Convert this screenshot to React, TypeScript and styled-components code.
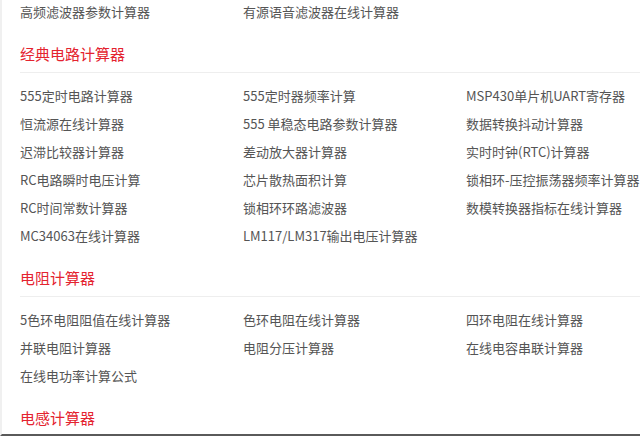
import React from 'react';
import styled, { createGlobalStyle } from 'styled-components';

const GlobalStyle = createGlobalStyle`
  html, body {
    margin: 0;
    padding: 0;
    background: #fff;
    overflow: hidden;
  }
`;

const StyledPage = styled.div`
  height: 434px;
  overflow: hidden;
  border-left: 2px solid #f0f0f0;
  border-bottom: 2px solid #5a5a5a;
  font-family: 'Noto Sans CJK SC', 'Microsoft YaHei', sans-serif;
`;

const StyledInner = styled.div`
  margin-top: -2px;
  padding-left: 18px;
`;

const StyledHeading = styled.h3`
  margin: 0;
  padding: 13px 0 6px;
  line-height: 24px;
  font-size: 15px;
  font-weight: normal;
  color: #e4232f;
  border-bottom: 1px solid #eeeeee;
`;

const StyledList = styled.ul<{ $top: number }>`
  list-style: none;
  margin: 0;
  padding: ${({ $top }) => $top}px 0 3px;
  display: grid;
  grid-template-columns: repeat(3, 223px);
`;

const StyledItem = styled.li`
  height: 28px;
  line-height: 28px;
  font-size: 13px;
  color: #555555;
  white-space: nowrap;
`;

type Section = {
  title?: string;
  items: string[];
};

const sections: Section[] = [
  {
    items: ['高频滤波器参数计算器', '有源语音滤波器在线计算器'],
  },
  {
    title: '经典电路计算器',
    items: [
      '555定时电路计算器',
      '555定时器频率计算',
      'MSP430单片机UART寄存器',
      '恒流源在线计算器',
      '555 单稳态电路参数计算器',
      '数据转换抖动计算器',
      '迟滞比较器计算器',
      '差动放大器计算器',
      '实时时钟(RTC)计算器',
      'RC电路瞬时电压计算',
      '芯片散热面积计算',
      '锁相环-压控振荡器频率计算器',
      'RC时间常数计算器',
      '锁相环环路滤波器',
      '数模转换器指标在线计算器',
      'MC34063在线计算器',
      'LM117/LM317输出电压计算器',
    ],
  },
  {
    title: '电阻计算器',
    items: [
      '5色环电阻阻值在线计算器',
      '色环电阻在线计算器',
      '四环电阻在线计算器',
      '并联电阻计算器',
      '电阻分压计算器',
      '在线电容串联计算器',
      '在线电功率计算公式',
    ],
  },
  {
    title: '电感计算器',
    items: [],
  },
];

export default function App() {
  return (
    <StyledPage>
      <GlobalStyle />
      <StyledInner>
        {sections.map((section, i) => (
          <section key={i}>
            {section.title && <StyledHeading>{section.title}</StyledHeading>}
            {section.items.length > 0 && (
              <StyledList $top={section.title ? 9 : 0}>
                {section.items.map((item) => (
                  <StyledItem key={item}>{item}</StyledItem>
                ))}
              </StyledList>
            )}
          </section>
        ))}
      </StyledInner>
    </StyledPage>
  );
}
